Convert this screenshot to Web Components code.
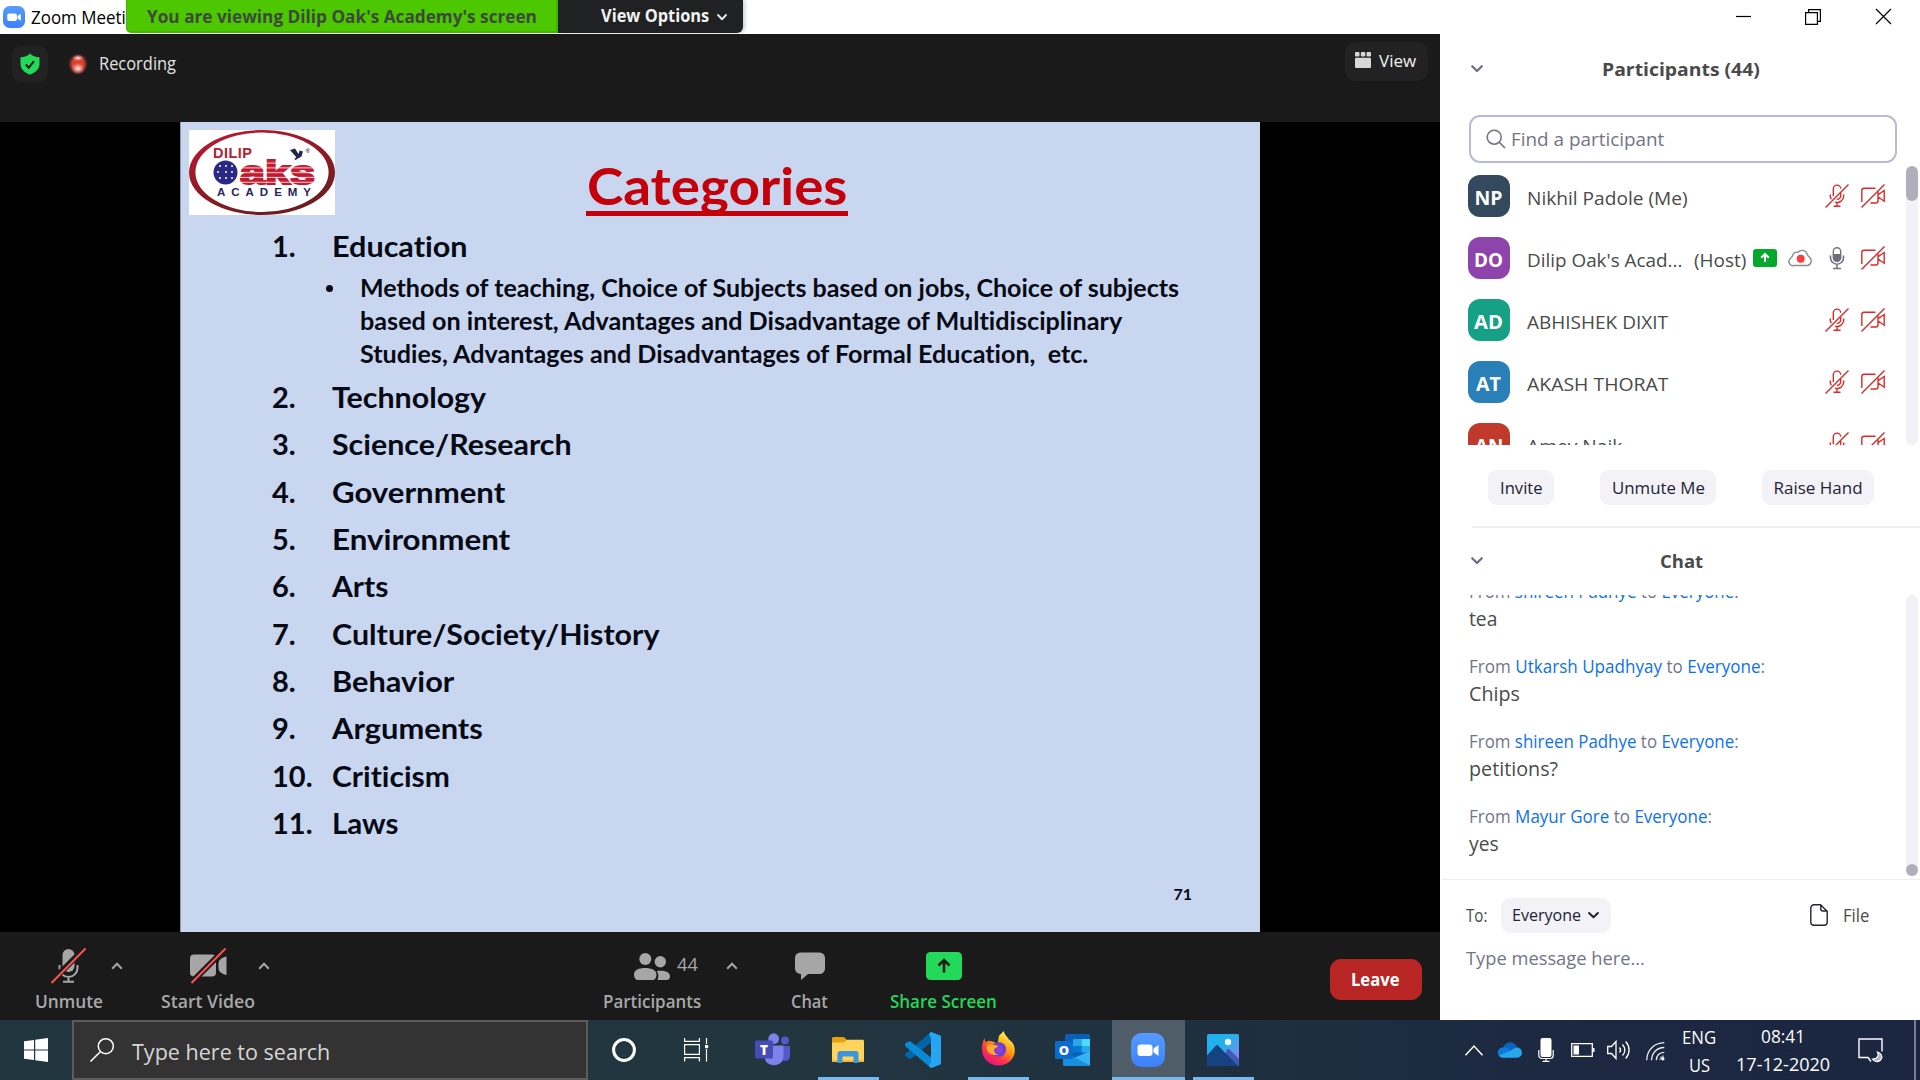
<!DOCTYPE html>
<html lang="en">
<head>
<meta charset="utf-8">
<title>Zoom Meeting</title>
<style>
html,body{margin:0;padding:0;width:1920px;height:1080px;overflow:hidden;background:#fff}
body{font-family:"Open Sans","Noto Sans",sans-serif}
</style>
</head>
<body>
<desktop-screen></desktop-screen>
<script>
/* Registers an element whose open shadow root is cloned from a template. */
function define(name, css, html, ready) {
  const tpl = document.createElement('template');
  tpl.innerHTML = `<style>:host{display:block;box-sizing:border-box}*{box-sizing:border-box}${css}</style>${html}`;
  customElements.define(name, class extends HTMLElement {
    connectedCallback() {
      if (this.shadowRoot) return;
      this.attachShadow({ mode: 'open' }).appendChild(tpl.content.cloneNode(true));
      if (ready) ready.call(this, this.shadowRoot);
    }
  });
}

/* One line of text: s = size, w = drawn width, l = line height, b = weight. */
define('t-x', `:host{flex:none;white-space:nowrap;position:static}span{display:inline-block;transform-origin:0 0;white-space:pre}`,
  `<span><slot></slot></span>`, function (root) {
    const a = n => this.getAttribute(n), span = root.querySelector('span');
    const s = +a('s') || 18, l = +a('l') || Math.ceil(s * 1.4);
    this.style.fontSize = s + 'px';
    this.style.lineHeight = this.style.height = l + 'px';
    if (a('b')) this.style.fontWeight = a('b');
    if (a('c')) this.style.color = a('c');
    if (a('w')) {
      this.style.width = a('w') + 'px';
      const fit = () => { span.style.transform = ''; const n = span.offsetWidth; if (n) span.style.transform = `scaleX(${(+a('w') / n).toFixed(4)})`; };
      fit(); requestAnimationFrame(fit);
    }
  });

const zoomCam = `<rect x="6.5" y="11.5" width="15" height="11.5" rx="3" fill="#fff"/><path d="M22.5 15.5l5-3.6v11l-5-3.6z" fill="#fff"/>`;
const ICONS = {
  zoom: [34, 34, `<defs><linearGradient id="z" x1="0" y1="0" x2="0" y2="1"><stop offset="0" stop-color="#559cff"/><stop offset="1" stop-color="#3d80fb"/></linearGradient></defs><rect width="34" height="34" rx="10.5" fill="url(#z)"/>${zoomCam}`],
  shield: [20, 22, `<path d="M10 .5C12.5 3 15.500 4.200 19.500 4.200V11c0 5-4 8.500-9.500 10.700C4.500 19.500.5 16 .5 11V4.200C4.500 4.200 7.500 3 10 .5z" fill="#23d959"/><path d="M5.800 11.500l3 3.200 5.200-6.700" fill="none" stroke="#1a1a1a" stroke-width="2"/>`],
  rec: [20, 22, `<defs><radialGradient id="r"><stop offset=".6" stop-color="#d8402f"/><stop offset="1" stop-color="#6b2a24" stop-opacity=".2"/></radialGradient><radialGradient id="g"><stop offset="0" stop-color="#fff" stop-opacity=".95"/><stop offset="1" stop-color="#ff9c90" stop-opacity="0"/></radialGradient></defs><ellipse cx="10" cy="11" rx="9.800" ry="10.500" fill="url(#r)"/><ellipse cx="10" cy="15.500" rx="7" ry="6" fill="url(#g)"/><ellipse cx="10" cy="5" rx="6" ry="3.200" fill="url(#g)"/>`],
  view: [16, 16, `<g fill="#d8d8d8"><rect width="4.500" height="4.500" rx="1"/><rect x="5.800" width="4.500" height="4.500" rx="1"/><rect x="11.500" width="4.500" height="4.500" rx="1"/><rect y="5.800" width="16" height="10.200" rx="1"/></g>`],
  min: [15, 15, `<path d="M0 7.500h15" stroke="#000" stroke-width="1.200"/>`],
  restore: [16, 16, `<path d="M.6 3.600h11.800v11.800H.6zM3.600 3.500V.6h11.800v11.800h-2.800" fill="none" stroke="#000" stroke-width="1.200"/>`],
  close: [15, 15, `<path d="M0 0l15 15M15 0L0 15" stroke="#000" stroke-width="1.200"/>`],
  down: [12, 8, `<path d="M1.200 1.200L6 6l4.800-4.800" fill="none" stroke="currentColor" stroke-width="2.200" stroke-linecap="round" stroke-linejoin="round"/>`],
  up: [12, 8, `<path d="M1.200 6.800L6 1.800l4.800 5" fill="none" stroke="#a6a6a6" stroke-width="2" />`],
  find: [20, 20, `<circle cx="8.200" cy="8.200" r="7" fill="none" stroke="#747487" stroke-width="1.600"/><path d="M13.500 13.500l5 5" stroke="#747487" stroke-width="1.700" stroke-linecap="round"/>`],
  micoff: [24, 24, `<g fill="none" stroke="#e02828" stroke-width="1.400"><path d="M8.300 12V4.800a3.700 3.700 0 0 1 7.400 0M15.700 9v2.800a3.700 3.700 0 0 1-4 3.600M5.300 10.500v2.300l.9 2.400M18.700 10.500v1.700a6.700 6.700 0 0 1-8.700 6M12 18.500V22M8.500 22.300h7"/><path d="M.5 23.500L23.500.5"/></g>`],
  camoff: [24, 24, `<g fill="none" stroke="#e02828" stroke-width="1.400"><path d="M14.500 4.200H3A2.300 2.300 0 0 0 .8 6.500V18M17 7.500v9.300a2.200 2.200 0 0 1-2.200 2.200H9.500M17.500 10.500l5.700-4v10.700l-5.700-4"/><path d="M.5 23.500L23.500.5"/></g>`],
  micon: [16, 24, `<rect x="4.300" y="1.700" width="7.400" height="13.600" rx="3.700" fill="#fff" stroke="#747480" stroke-width="1.400"/><path d="M4.300 8h7.400v3.800a3.700 3.700 0 0 1-7.400 0z" fill="#6e6e7a"/><path d="M1.500 9.500v2.200a6.500 6.500 0 0 0 13 0V9.500M8 18.300V22M4 22.500h8" fill="none" stroke="#747480" stroke-width="1.600"/>`],
  sharing: [24, 18, `<rect width="24" height="18" rx="3" fill="#04a92b"/><path d="M12 13V5.500M8.200 8.800L12 5l3.800 3.800" fill="none" stroke="#fff" stroke-width="2"/>`],
  cloudrec: [24, 18, `<path d="M5 16.500A4 4 0 0 1 1.500 9.500C3 8.500 3.300 8 4 5.500 5 3 7.500 3 9 3.200c2-2.400 7-3 9 1.300.5 1.500.5 2 2 3.200A5 5 0 0 1 19 16.500z" fill="#fff" stroke="#8b8b93" stroke-width="1.400"/><circle cx="11.700" cy="9.800" r="4" fill="#ff3b3b"/>`],
  file: [18, 22, `<path d="M10.500.8H4A3.200 3.200 0 0 0 .8 4v14A3.200 3.200 0 0 0 4 21.200h10a3.200 3.200 0 0 0 3.200-3.200V7.200zM10.800 1v4a2 2 0 0 0 2 2h4.300" fill="none" stroke="#232333" stroke-width="1.400" stroke-linejoin="round"/>`],
  bigmic: [36, 36, `<g stroke="#a6a6a6" stroke-width="2" fill="none"><path d="M8.500 17v3a9 9 0 0 0 18 0v-3M17.500 29v4M12 33.700h11"/></g><rect x="11.500" y="1" width="12" height="23" rx="6" fill="#a6a6a6"/><path d="M0 34L34 0" stroke="#1a1a1a" stroke-width="6"/><path d="M.5 35L34.500.5" stroke="#ff5050" stroke-width="2"/>`],
  bigcam: [38, 36, `<rect x="0" y="6.500" width="26" height="22" rx="4" fill="#a6a6a6"/><path d="M36.500 8.500v18.500c-6-1.500-8-4-8-7v-4.500c0-3 2-5.500 8-7z" fill="#a6a6a6"/><path d="M2 34L36 0" stroke="#1a1a1a" stroke-width="6"/><path d="M1.500 35L35.500.5" stroke="#ff5050" stroke-width="2"/>`],
  people: [36, 27, `<g fill="#a6a6a6"><circle cx="11.300" cy="6" r="6"/><ellipse cx="26.300" cy="8.700" rx="5.700" ry="5.700"/><path d="M0 21.500C0 17 5 15 11 15s11.500 2 11.500 6.500C22.500 25 21 27 18.500 27H4C1.500 27 0 25 0 21.500zM22.800 18c6-1 13.200 0 13.200 5.500 0 2.500-1.500 3.500-3.500 3.500h-9c1.300-3 1.300-6-.7-9z"/></g>`],
  chat: [30, 28, `<path d="M5.500.5h19A5.500 5.500 0 0 1 30 6v10.500a5.500 5.500 0 0 1-5.500 5.500H13l-7 6v-6A5.500 5.500 0 0 1 0 16.500V6A5.500 5.500 0 0 1 5.500.5z" fill="#a6a6a6"/>`],
  share: [36, 28, `<rect width="36" height="28" rx="4.500" fill="#23d959"/><path d="M18 20.500V9M12.500 13.500L18 8l5.500 5.500" fill="none" stroke="#1a1a1a" stroke-width="2.600"/>`],
  win: [24, 24, `<path d="M0 3.300L10 2v9.500H0zM11.200 1.700L24 0v11.500H11.200zM0 12.600h10V22L0 20.700zM11.200 12.600H24V24l-12.800-1.700z" fill="#fff"/>`],
  wsearch: [24, 24, `<circle cx="15.800" cy="8.200" r="7.500" fill="none" stroke="#fff" stroke-width="1.500"/><path d="M10.300 13.700L.5 23.500" stroke="#fff" stroke-width="1.600"/>`],
  cortana: [26, 26, `<circle cx="13" cy="13" r="10.400" fill="none" stroke="#fff" stroke-width="3"/>`],
  taskview: [26, 24, `<g fill="none" stroke="#fff" stroke-width="1.200"><path d="M.6 0v3.400h14.800V0M.6 23.500v-3.800h14.800v3.800M.6 6.600h14.800v9.800H.6zM22.500 0v6M22.500 11v12.500"/></g><rect x="21" y="7" width="3.200" height="3.200" fill="#fff"/>`],
  teams: [36, 33, `<circle cx="30" cy="7.500" r="3.900" fill="#5059c9"/><path d="M24 13h11v9.500c0 6-5 6.500-8 4.500z" fill="#5059c9"/><circle cx="18.700" cy="5.700" r="5.400" fill="#7b83eb"/><path d="M9.500 12.500h19v11c0 11.500-19 11.500-19 0z" fill="#7b83eb"/><rect y="7.500" width="18" height="18" rx="1.500" fill="#454cb8"/><text x="9" y="21.500" text-anchor="middle" font-family="Open Sans,sans-serif" font-weight="800" font-size="13.500" fill="#fff">T</text>`],
  explorer: [32, 28, `<path d="M0 1.500C0 .6.600 0 1.500 0H12l3 3-3 7H0z" fill="#e5a00d"/><path d="M0 5.500h12l3-2.800h15.500c.9 0 1.500.6 1.500 1.500V25H0z" fill="#ffd35c"/><path d="M0 23h32v2H0z" fill="#f3bd3c"/><path d="M5.500 26V17a3 3 0 0 1 3-3h15a3 3 0 0 1 3 3v9h-5v-6.500h-11V26z" fill="#3b95dc"/>`],
  vscode: [36, 36, `<path d="M26 0l10 4v28l-10 4z" fill="#26a5f0"/><path d="M26 0v10.500L5.500 27.200 0 24v-2z" fill="#0065a9"/><path d="M26 36V25.500L5 9 0 11.500V14z" fill="#0a8ad6"/><path d="M26 0l10 4v28l-10 4-2-2 3-6.500v-19L24 2z" fill="#26a5f0"/>`],
  firefox: [36, 36, `<defs><linearGradient id="f" x1=".8" y1=".1" x2=".25" y2=".95"><stop offset="0" stop-color="#fff44f"/><stop offset=".4" stop-color="#ff980e"/><stop offset=".7" stop-color="#ff3647"/><stop offset="1" stop-color="#e31587"/></linearGradient><radialGradient id="p"><stop offset="0" stop-color="#a33be0"/><stop offset="1" stop-color="#5b3fd0"/></radialGradient></defs><path d="M3.500 7.500l1 4 3-1.500 4 .5L17 13l1.500-8 5-5c.5 4 3 5 5 8.500l3.500 3c3 4 3.500 9 2 13.500C31 32 25 35.500 18 35.500 8 35.500 1 28 1 18.500c0-4 1-7.500 2.500-11z" fill="url(#f)"/><circle cx="18.300" cy="19" r="7.500" fill="url(#p)"/><path d="M6 15c3-2 5-1.500 7-.5 2.500 0 4 .5 4.500 1.300-1 1.700-3.500 1.700-4 3.200-.5 3 2 5 5 5.500C9 26 4.500 21 6 15z" fill="#ffab2a"/>`],
  outlook: [36, 33, `<rect x="10" y="0" width="25" height="26" rx="1.500" fill="#0a5fb4"/><rect x="18" y="5" width="8.500" height="7" fill="#28a8ea"/><rect x="26.500" y="5" width="8.500" height="7" fill="#50d9ff"/><rect x="18" y="12" width="8.500" height="6.500" fill="#0078d4"/><rect x="26.500" y="12" width="8.500" height="6.500" fill="#28a8ea"/><path d="M8 18l14 6 13-7v13.500a1.500 1.500 0 0 1-1.500 1.500h-24A1.500 1.500 0 0 1 8 30.500z" fill="#1a90dd"/><path d="M35 17v14.500L20 23.500z" fill="#35b3f2"/><rect y="7" width="18" height="18" rx="1.500" fill="#0c6ccb"/><text x="9" y="20.800" text-anchor="middle" font-family="Open Sans,sans-serif" font-weight="800" font-size="13" fill="#fff">O</text>`],
  photos: [32, 32, `<defs><linearGradient id="s" x1="0" y1="0" x2="1" y2="1"><stop offset=".4" stop-color="#22b0ec"/><stop offset="1" stop-color="#9a7fe8"/></linearGradient></defs><rect width="32" height="32" rx="1.500" fill="url(#s)"/><path d="M20 15.500c.8-.8 1.800-.8 2.600 0L32 25v7H14z" fill="#4258b8"/><path d="M0 21.500L8.500 12c1-1.200 2-1.200 3 0L31 32H1.500A1.500 1.500 0 0 1 0 30.500z" fill="#154280"/><circle cx="21" cy="8" r="3.200" fill="#eef6fc"/>`],
  trayup: [18, 11, `<path d="M.5 10.300L9 1l8.500 9.300" fill="none" stroke="#fff" stroke-width="1.500"/>`],
  onedrive: [24, 16, `<path d="M5 6.500C7-1 16-2 19 5l-5 4z" fill="#0a64bd"/><path d="M5 15.500a5 5 0 0 1-.5-10c4-1 6 1 9 3.500L8 15.500z" fill="#0d7bdb"/><path d="M17 5.800c4-1.500 7 1.500 7 5a4.900 4.900 0 0 1-4.800 4.900H5c-1.500 0-3-.7-4-2.200L13 8.500z" fill="#28a6ec"/>`],
  traymic: [16, 24, `<rect x="2.500" y="0" width="11" height="19" rx="2" fill="#fff"/><path d="M.8 12v5.500a3 3 0 0 0 3 3h8.400a3 3 0 0 0 3-3V12M8 20.500v3M4.500 23.400h7" fill="none" stroke="#fff" stroke-width="1.200"/>`],
  battery: [24, 14, `<path d="M.7.700h20.600v12.600H.7z" fill="none" stroke="#fff" stroke-width="1.300"/><rect x="22" y="5" width="1.500" height="4" fill="#fff"/><rect x="2.500" y="2.500" width="5.500" height="9" fill="#fff"/>`],
  speaker: [24, 20, `<g fill="none" stroke="#fff" stroke-width="1.300"><path d="M.7 6.500h3.800L9 1.500v17l-4.500-5H.7z"/><path d="M12.500 7.500c1.300 1.500 1.300 3.500 0 5M15.500 4.500c3 3.500 3 7.500 0 11M18.700 1.500c4.500 5 4.500 12 0 17"/></g>`],
  wifi: [19, 19, `<g fill="none" stroke="#e8ecf0" stroke-width="1.300"><path d="M.7 18.300C1 8 8 1 18.300.7M5.500 18.300c.3-7.500 5-12.500 12.800-12.800M10.300 18.300c.2-4.800 3-7.800 8-8"/><path d="M14 18.300c0-2.500 1.500-4 4-4.300" opacity=".6"/></g><circle cx="16.800" cy="16.800" r="1.700" fill="#fff"/>`],
  notif: [26, 25, `<path d="M13 23.500l-3-4H1V1h23v12.500" fill="none" stroke="#fff" stroke-width="1.400"/><path d="M19.500 14c2 4-1 7.500-5 7 1.500 3 7 4 9-.5 1-2.500-.5-5.500-4-6.500z" fill="#a9b1bd" stroke="#fff" stroke-width="1.200"/>`],
  logo: [146, 85, `<defs><linearGradient id="o" x1="0" y1="0" x2=".6" y2="1"><stop offset="0" stop-color="#c01830"/><stop offset="1" stop-color="#6d1d1f"/></linearGradient><pattern id="k" width="8" height="4.800" patternUnits="userSpaceOnUse"><rect width="8" height="4.800" fill="#f3c9cd"/><rect width="8" height="3.700" fill="#c4182f"/></pattern></defs><rect width="146" height="85" fill="#fff"/><path fill-rule="evenodd" d="M73 0A73 42.500 0 1 1 73 85 73 42.500 0 1 1 73 0zM73 2.500A66.500 39.700 0 1 0 73 82 66.500 39.700 0 1 0 73 2.500z" fill="url(#o)"/>
  <g font-family="Liberation Sans,sans-serif" font-weight="700"><text x="24" y="27.500" font-size="14.500" fill="#b3202f" textLength="39" lengthAdjust="spacing">DILIP</text><text x="51" y="53.500" font-size="34" fill="url(#k)" stroke="url(#k)" stroke-width="2" textLength="75" lengthAdjust="spacingAndGlyphs">aks</text><text x="28" y="65.500" font-size="11.500" fill="#26265c" textLength="94" lengthAdjust="spacing">ACADEMY</text></g>
  <circle cx="36.500" cy="42.500" r="12" fill="#2a2a86"/><g fill="#fff"><circle cx="31" cy="36" r="1"/><circle cx="37" cy="36" r="1"/><circle cx="43" cy="36" r="1"/><circle cx="29" cy="42" r="1"/><circle cx="37" cy="42" r="1"/><circle cx="43" cy="42" r="1"/><circle cx="31" cy="48" r="1"/><circle cx="37" cy="48" r="1"/><circle cx="43" cy="48" r="1"/></g><path d="M101 20l5-1.500 3.500 5.500 1 -3.500 3.500 1-1.500 5-6 3.500-1.200-1 2-1.800z" fill="#23284f"/><text x="116.500" y="23" font-size="6" font-family="Liberation Sans,sans-serif" fill="#444">®</text>`]
};
define('ui-icon', `:host{flex:none;line-height:0}svg{display:block;width:100%;height:100%;overflow:visible}`, ``, function (root) {
  const [w, h, body] = ICONS[this.getAttribute('name')];
  this.style.width = (this.getAttribute('w') || w) + 'px';
  this.style.height = (this.getAttribute('h') || h) + 'px';
  const box = document.createElement('div');
  box.style.height = '100%';
  box.innerHTML = `<svg viewBox="0 0 ${w} ${h}" preserveAspectRatio="none">${body}</svg>`;
  root.appendChild(box);
});

define('title-bar', `:host{display:flex;height:34px;background:#fff}
.name{display:flex;width:126px;height:34px;overflow:hidden;padding:6px 0 0 3px;flex:none}
.green{width:432px;height:33px;background:#4cc700;border:solid #43b502;border-width:0 2px 2px 1px;border-radius:0 0 0 5px;padding-left:20px;flex:none}
.dark{width:185px;height:33px;background:#202123;border-radius:0 0 6px 0;display:flex;padding-left:43px;flex:none;box-shadow:2px 0 4px #0003}
.win{margin-left:auto;display:flex;padding:9px 29px 0 0;gap:54px}`,
`<div class="name"><ui-icon name="zoom" w="22" h="22"></ui-icon><t-x s="18" l="23" w="114" c="#000" style="margin-left:6px">Zoom Meeting</t-x></div>
<div class="green"><t-x s="17.300" l="33" w="390" b="700" c="#3b4a3a">You are viewing Dilip Oak's Academy's screen</t-x></div>
<div class="dark"><t-x s="17" l="32" w="108" b="700" c="#f2f2f2">View Options</t-x><ui-icon name="down" w="10" h="7" style="margin:14px 0 0 8px;color:#eee"></ui-icon></div>
<div class="win"><ui-icon name="min"></ui-icon><ui-icon name="restore" style="margin-right:1px"></ui-icon><ui-icon name="close"></ui-icon></div>`);

define('meeting-header', `:host{display:flex;height:88px;background:#1a1a1a;padding:0 12px;align-items:flex-start}
.shield{width:36px;height:36px;margin-top:12px;border-radius:9px;background:#222;display:grid;place-items:center}
.view{margin-left:auto;margin-top:8px;width:83px;height:39px;border-radius:11px;background:#222;display:flex;align-items:flex-start;padding:10px 0 0 10px;gap:8px}`,
`<div class="shield"><ui-icon name="shield"></ui-icon></div><ui-icon name="rec" style="margin:19px 0 0 20px"></ui-icon><t-x s="17.300" l="26" w="77" c="#e2e2e2" style="margin:17px 0 0 11px">Recording</t-x>
<div class="view"><ui-icon name="view"></ui-icon><t-x s="17" l="17" w="37" c="#f2f2f2">View</t-x></div>`);

define('slide-item', `:host{display:flex;height:47.350px}.n{width:60px;flex:none}`, `<div class="n"><t-x s="29" l="47"><slot name="n"></slot></t-x></div><slot></slot>`);
const topics = [['2.', 'Technology', 154], ['3.', 'Science/Research', 240], ['4.', 'Government', 173], ['5.', 'Environment', 178], ['6.', 'Arts', 56], ['7.', 'Culture/Society/History', 327], ['8.', 'Behavior', 122], ['9.', 'Arguments', 151], ['10.', 'Criticism', 118], ['11.', 'Laws', 67]];
const item = ([n, t, w]) => `<slide-item><span slot="n">${n}</span><t-x s="29" l="47" w="${w}">${t}</t-x></slide-item>`;
define('slide-view', `:host{width:1080px;height:810px;background:#c9d6ef;border-left:1px solid #8f97aa;padding:8px 0 0 7.500px;font-family:Lato,"Open Sans",sans-serif;font-weight:700;color:#070a14;font-variant-ligatures:none}
.top{display:flex;height:92px}.title{margin:24px 0 0 251.500px;height:62px;border-bottom:5px solid #c4000a;color:#c4000a;padding:0 1px 0 1px;flex:none}
.list{padding-left:83.500px}.sub{display:flex;margin:3px 0 2.500px 52px;height:98px}.dot{width:7px;height:7px;border-radius:50%;background:#070a14;margin:13px 27px 0 2px;flex:none}
.no{padding:36px 0 0 985px}`,
`<div class="top"><ui-icon name="logo"></ui-icon><div class="title"><t-x s="52" l="62" w="260">Categories</t-x></div></div>
<div class="list">${item(['1.', 'Education', 136])}
<div class="sub"><div class="dot"></div><div><t-x s="23.800" l="32.700" w="819">Methods of teaching, Choice of Subjects based on jobs, Choice of subjects</t-x><t-x s="23.800" l="32.700" w="762">based on interest, Advantages and Disadvantage of Multidisciplinary</t-x><t-x s="23.800" l="32.700" w="728">Studies, Advantages and Disadvantages of Formal Education,  etc.</t-x></div></div>
${topics.map(item).join('')}</div><div class="no"><t-x s="16" l="24" w="19">71</t-x></div>`);

define('tool-button', `:host{display:flex;flex-direction:column;align-items:center;flex:none;color:#a8a8a8;height:88px;padding-top:16px}.i{height:42px;display:flex;flex:none}`,
`<div class="i"><slot name="icon"></slot></div><slot></slot>`);
define('meeting-toolbar', `:host{display:flex;height:88px;background:#1a1a1a;align-items:flex-start}
.c{margin-top:30px}.leave{width:92px;height:41px;border-radius:11px;background:#b72525;margin:27px 18px 0 auto;padding-left:21px}`,
`<tool-button style="margin-left:35px"><ui-icon slot="icon" name="bigmic"></ui-icon><t-x s="17.300" l="24" w="68" b="600">Unmute</t-x></tool-button>
<ui-icon class="c" name="up" style="margin-left:8px"></ui-icon>
<tool-button style="margin-left:38px"><ui-icon slot="icon" name="bigcam" style="margin-left:2px"></ui-icon><t-x s="17.300" l="24" w="94" b="600">Start Video</t-x></tool-button>
<ui-icon class="c" name="up" style="margin-left:3px"></ui-icon>
<tool-button style="margin-left:333px"><ui-icon slot="icon" name="people" style="margin:5px 7px 0 30px"></ui-icon><t-x slot="icon" s="17.300" l="33" w="21" style="margin-right:3px">44</t-x><t-x s="17.300" l="24" w="98" b="600">Participants</t-x></tool-button>
<ui-icon class="c" name="up" style="margin-left:25px"></ui-icon>
<tool-button style="margin-left:53px"><ui-icon slot="icon" name="chat" style="margin-top:4px"></ui-icon><t-x s="17.300" l="24" w="37" b="600">Chat</t-x></tool-button>
<tool-button style="margin-left:62px;color:#23d959"><ui-icon slot="icon" name="share" style="margin-top:4px"></ui-icon><t-x s="17.300" l="24" w="107" b="600">Share Screen</t-x></tool-button>
<div class="leave"><t-x s="17.300" l="41" w="48" b="700" c="#fff">Leave</t-x></div>`);

define('panel-header', `:host{display:flex;align-items:center;height:30px;padding-left:31px}`, `<ui-icon name="down" style="color:#6c6c80"></ui-icon><slot></slot>`);
define('person-row', `:host{display:flex;height:62px;align-items:flex-start}
.av{width:42px;height:42px;border-radius:12px;background:var(--av);display:grid;place-items:center;margin-right:17.500px;flex:none}
.ic{margin-left:auto;display:flex;gap:12px;padding-top:9.500px}`,
`<div class="av"><slot name="av"></slot></div><slot></slot><div class="ic"><slot name="ic"></slot></div>`);
const person = (ini, iw, col, name, w, extra = '', icons = '<ui-icon slot="ic" name="micoff"></ui-icon>') =>
  `<person-row style="--av:${col}"><t-x slot="av" s="19.500" l="42" w="${iw}" b="700" c="#fff" style="margin-top:2px">${ini}</t-x><t-x s="19" l="46" w="${w}" c="#4a4a4a">${name}</t-x>${extra}${icons}<ui-icon slot="ic" name="camoff"></ui-icon></person-row>`;
define('participants-panel', `:host{height:494px;padding-top:20px}
.find{margin:31px 0 0 29px;width:428px;height:48px;border:2px solid #bcb9d2;border-radius:11px;display:flex;align-items:center;padding-left:15px;gap:5px}
.body{display:flex;height:282px;overflow:hidden}.list{padding:11.500px 0 0 27.500px;flex:none;width:445px}
.track{margin:3px 2px 0 auto;width:12px;height:279px;border-radius:6px;background:#f1f1f6}.thumb{height:35px;border-radius:6px;background:#b0afb9}
.act{display:flex;padding:25px 0 0 48px;height:81px}.b{height:35px;border-radius:9px;background:#f2f2f7;padding:0 11.500px;flex:none}
.rule{height:2px;margin-left:32px;background:#efeff1}`,
`<panel-header><t-x s="18.500" l="28" w="158" b="700" c="#4a4a4a" style="margin-left:119px">Participants (44)</t-x></panel-header>
<div class="find"><ui-icon name="find"></ui-icon><t-x s="19" l="45" w="153" c="#747487">Find a participant</t-x></div>
<div class="body"><div class="list">
${person('NP', 28, '#34495e', 'Nikhil Padole (Me)', 161)}
${person('DO', 29, '#8e44ad', "Dilip Oak's Acad...", 155, '<t-x s="19" l="46" w="52" c="#4a4a4a" style="margin-left:12px">(Host)</t-x>', '<ui-icon slot="ic" name="sharing" style="margin-top:3px"></ui-icon><ui-icon slot="ic" name="cloudrec" style="margin-top:3px"></ui-icon><ui-icon slot="ic" name="micon" style="margin:0 4px"></ui-icon>')}
${person('AD', 29, '#16a085', 'ABHISHEK DIXIT', 141)}
${person('AT', 25, '#2980b9', 'AKASH THORAT', 141)}
${person('AN', 28, '#c0392b', 'Amey Naik', 95)}
</div><div class="track"><div class="thumb"></div></div></div>
<div class="act"><div class="b"><t-x s="17" l="35" w="43" c="#232333">Invite</t-x></div><div class="b" style="margin-left:46px"><t-x s="17" l="35" w="93" c="#232333">Unmute Me</t-x></div><div class="b" style="margin-left:46px"><t-x s="17" l="35" w="89" c="#232333">Raise Hand</t-x></div></div>
<div class="rule"></div>`);

define('chat-message', `:host{height:75px}`, `<slot></slot>`);
const msg = (who, w, text, tw) => `<chat-message><t-x s="17.300" l="28" w="${w}" c="#747487">From <span style="color:#0e71eb">${who}</span> to <span style="color:#0e71eb">Everyone</span>:</t-x><t-x s="19.300" l="26" w="${tw}" c="#4a4a4a">${text}</t-x></chat-message>`;
define('chat-panel', `:host{height:492px;padding-top:18px}
.body{display:flex;height:284px;margin-top:19px;overflow:hidden}.log{padding-left:29px;margin-top:-17px}
.track{margin:0 2px 0 auto;width:12px;height:281px;border-radius:6px;background:#f1f1f6;display:flex;align-items:flex-end;flex:none}.thumb{height:12px;width:12px;border-radius:6px;background:#b0afb9}
.compose{border-top:1px solid #eeeeef;margin-left:2px;padding:18px 0 0 25px}
.row{display:flex;height:36px;align-items:flex-start}.pill{display:flex;width:110px;height:35px;background:#f2f2f7;border-radius:9px;padding-left:11px;margin-left:14px;flex:none}`,
`<panel-header><t-x s="18.500" l="28" w="43" b="700" c="#4a4a4a" style="margin-left:177px">Chat</t-x></panel-header>
<div class="body"><div class="log">${msg('shireen Padhye', 270, 'tea', 28)}${msg('Utkarsh Upadhyay', 296, 'Chips', 51)}${msg('shireen Padhye', 270, 'petitions?', 89)}${msg('Mayur Gore', 243, 'yes', 30)}</div><div class="track"><div class="thumb"></div></div></div>
<div class="compose"><div class="row"><t-x s="17.300" l="35" w="21" c="#4a4a4a" style="margin-left:-1px">To:</t-x><div class="pill"><t-x s="17" l="34" w="69" c="#232333">Everyone</t-x><ui-icon name="down" w="11" h="7" style="color:#232333;margin:14px 0 0 7px"></ui-icon></div><ui-icon name="file" style="margin:6px 0 0 199px"></ui-icon><t-x s="17.300" l="35" w="26" c="#4a4a4a" style="margin-left:15px">File</t-x></div>
<t-x s="18.500" l="30" w="179" c="#747487" style="margin:9px 0 0 -1px">Type message here...</t-x></div>`);

define('task-app', `:host{flex:none;height:60px;display:flex;flex-direction:column}.i{height:57px;display:grid;place-items:center}.u{height:3px}
:host([open]) .u,:host([active]) .u{background:#76b9ed}:host([active]){background:#4f5d68}`, `<div class="i"><slot></slot></div><div class="u"></div>`);
define('win-taskbar', `:host{display:flex;height:60px;background:linear-gradient(90deg,#21363f 0,#22363f 40%,#20303f 60%,#1c2941 80%,#1b2640 100%)}
.start{width:72px;display:grid;place-items:center;flex:none}.search{width:516px;height:60px;background:#333;border:2px solid #5c5a5c;display:flex;align-items:center;padding-left:16px;flex:none;gap:18px}
.tray{display:flex;align-items:center;flex:none}.col{display:flex;flex-direction:column;align-items:center;height:60px;padding-top:3px}
.end{width:2px;height:60px;background:#75808c;margin-left:30px}`,
`<div class="start"><ui-icon name="win"></ui-icon></div>
<div class="search"><ui-icon name="wsearch"></ui-icon><t-x s="21" l="46" w="198" c="#d6d6d6" style="margin-top:3px">Type here to search</t-x></div>
<task-app style="width:72px"><ui-icon name="cortana" style="margin-top:3px"></ui-icon></task-app>
<task-app style="width:78px"><ui-icon name="taskview" style="margin:3px 0 0 -5px"></ui-icon></task-app>
<task-app style="width:69px"><ui-icon name="teams" style="margin:2px 0 0 1px"></ui-icon></task-app>
<task-app open style="width:61px;margin-left:11px"><ui-icon name="explorer" style="margin:4px 0 0 -1px"></ui-icon></task-app>
<task-app style="width:61px;margin-left:13px"><ui-icon name="vscode" style="margin-top:3px"></ui-icon></task-app>
<task-app open style="width:61px;margin-left:15px"><ui-icon name="firefox" w="35" h="35"></ui-icon></task-app>
<task-app style="width:61px;margin-left:13px"><ui-icon name="outlook" style="margin-top:3px"></ui-icon></task-app>
<task-app active style="width:73px;margin-left:9px"><ui-icon name="zoom" style="margin:3px 0 0 -1px"></ui-icon></task-app>
<task-app open style="width:61px;margin-left:8px"><ui-icon name="photos" style="margin:3px 0 0 -1px"></ui-icon></task-app>
<div class="tray" style="margin-left:211px"><ui-icon name="trayup"></ui-icon><ui-icon name="onedrive" style="margin-left:15px"></ui-icon><ui-icon name="traymic" style="margin-left:15.500px"></ui-icon><ui-icon name="battery" style="margin-left:17.500px"></ui-icon><ui-icon name="speaker" style="margin-left:12px"></ui-icon><ui-icon name="wifi" style="margin:3px 0 0 15px"></ui-icon>
<div class="col" style="margin-left:17px"><t-x s="17.300" l="29" w="34" c="#fff">ENG</t-x><t-x s="17.300" l="27" w="21" c="#fff">US</t-x></div>
<div class="col" style="margin-left:20px"><t-x s="17.300" l="27" w="44" c="#fff">08:41</t-x><t-x s="17.300" l="29" w="94" c="#fff">17-12-2020</t-x></div>
<ui-icon name="notif" style="margin:0 0 0 28px"></ui-icon><div class="end"></div></div>`);

define('desktop-screen', `:host{width:1920px;height:1080px;display:flex;flex-direction:column}
.main{display:flex;height:986px;flex:none}.stage{width:1440px;background:#000;flex:none}.mid{display:flex;justify-content:center;height:810px}.side{flex:1;background:#fff;width:480px}`,
`<title-bar></title-bar><div class="main"><div class="stage"><meeting-header></meeting-header><div class="mid"><slide-view></slide-view></div><meeting-toolbar></meeting-toolbar></div>
<div class="side"><participants-panel></participants-panel><chat-panel></chat-panel></div></div><win-taskbar></win-taskbar>`);
</script>
</body>
</html>
